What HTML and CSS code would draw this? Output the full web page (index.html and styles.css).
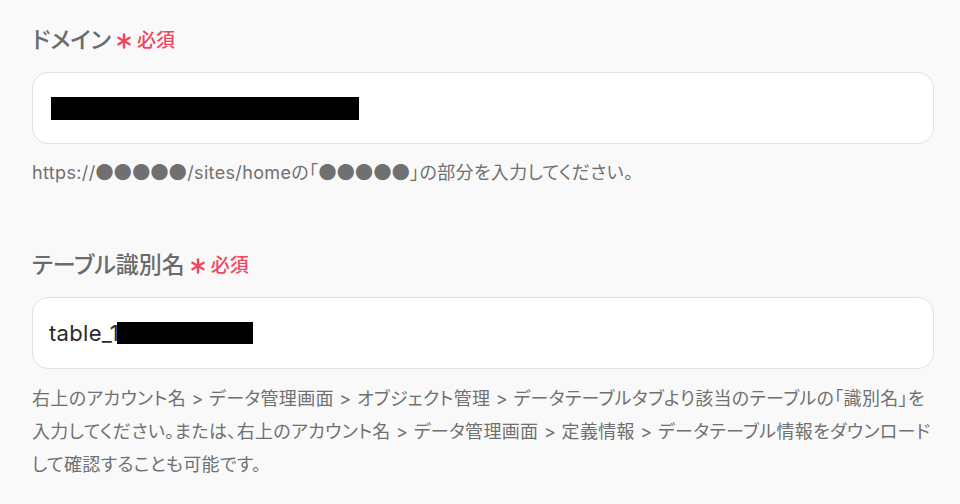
FILE: index.html
```html
<!DOCTYPE html>
<html lang="ja">
<head>
<meta charset="utf-8">
<link rel="stylesheet" href="styles.css">
</head>
<body>
<main class="form">
  <section class="field">
    <div class="label">
      <span class="label-text">ドメイン</span>
      <svg class="asterisk" viewBox="0 0 16 16" width="16" height="16"><g stroke="#f2455f" stroke-width="2.4" stroke-linecap="round"><line x1="8" y1="1.5" x2="8" y2="14.5"/><line x1="2.4" y1="4.75" x2="13.6" y2="11.25"/><line x1="2.4" y1="11.25" x2="13.6" y2="4.75"/></g></svg>
      <span class="required">必須</span>
    </div>
    <div class="input"><span class="redact redact-domain"></span></div>
    <p class="help">https://<span class="dots">●●●●●</span>/sites/homeの「<span class="dots">●●●●●</span>」の部分を入力してください。</p>
  </section>
  <section class="field">
    <div class="label">
      <span class="label-text">テーブル識別名</span>
      <svg class="asterisk" viewBox="0 0 16 16" width="16" height="16"><g stroke="#f2455f" stroke-width="2.4" stroke-linecap="round"><line x1="8" y1="1.5" x2="8" y2="14.5"/><line x1="2.4" y1="4.75" x2="13.6" y2="11.25"/><line x1="2.4" y1="11.25" x2="13.6" y2="4.75"/></g></svg>
      <span class="required">必須</span>
    </div>
    <div class="input"><span class="value">table_1</span><span class="redact redact-table"></span></div>
    <p class="help help-long">右上のアカウント名 &gt; データ管理画面 &gt; オブジェクト管理 &gt; データテーブルタブより該当のテーブルの「識別名」を入力してください。または、右上のアカウント名 &gt; データ管理画面 &gt; 定義情報 &gt; データテーブル情報をダウンロードして確認することも可能です。</p>
  </section>
</main>
</body>
</html>
```
FILE: styles.css
```css
html, body {
  margin: 0;
  background: #f9f9f9;
}
body {
  font-family: "Inter", "Noto Sans CJK JP", sans-serif;
  color: #6b6b6b;
  font-feature-settings: "palt";
}
.form {
  padding: 24px 26px 0 32px;
  display: flex;
  flex-direction: column;
  gap: 63px;
}
.field {
  display: flex;
  flex-direction: column;
}
.label {
  display: flex;
  align-items: center;
  height: 28px;
  gap: 5px;
}
.label-text {
  font-size: 23px;
  font-weight: 500;
  color: #6b6b6b;
}
.asterisk {
  margin-top: 5px;
}
.required {
  font-size: 19px;
  font-weight: 500;
  color: #f2455f;
}
.input {
  margin-top: 20px;
  height: 70px;
  background: #fff;
  border: 1px solid #e1e1e6;
  border-radius: 16px;
  display: flex;
  align-items: center;
  padding: 0 16px;
}
.value {
  font-size: 22px;
  letter-spacing: 0.3px;
  color: #2a2a2a;
}
.redact {
  display: block;
  background: #000;
  height: 23px;
}
.redact-domain {
  width: 308px;
  margin-left: 2px;
}
.redact-table {
  width: 136px;
  margin-left: -2px;
  height: 22px;
}
.help {
  margin: 16px 0 0;
  font-size: 18px;
  letter-spacing: 0.35px;
  line-height: 26px;
  color: #707070;
}
.dots {
  font-family: "Noto Sans CJK JP", sans-serif;
  line-height: 0;
}
.help-long {
  margin-top: 13px;
  line-height: 33px;
}
```
